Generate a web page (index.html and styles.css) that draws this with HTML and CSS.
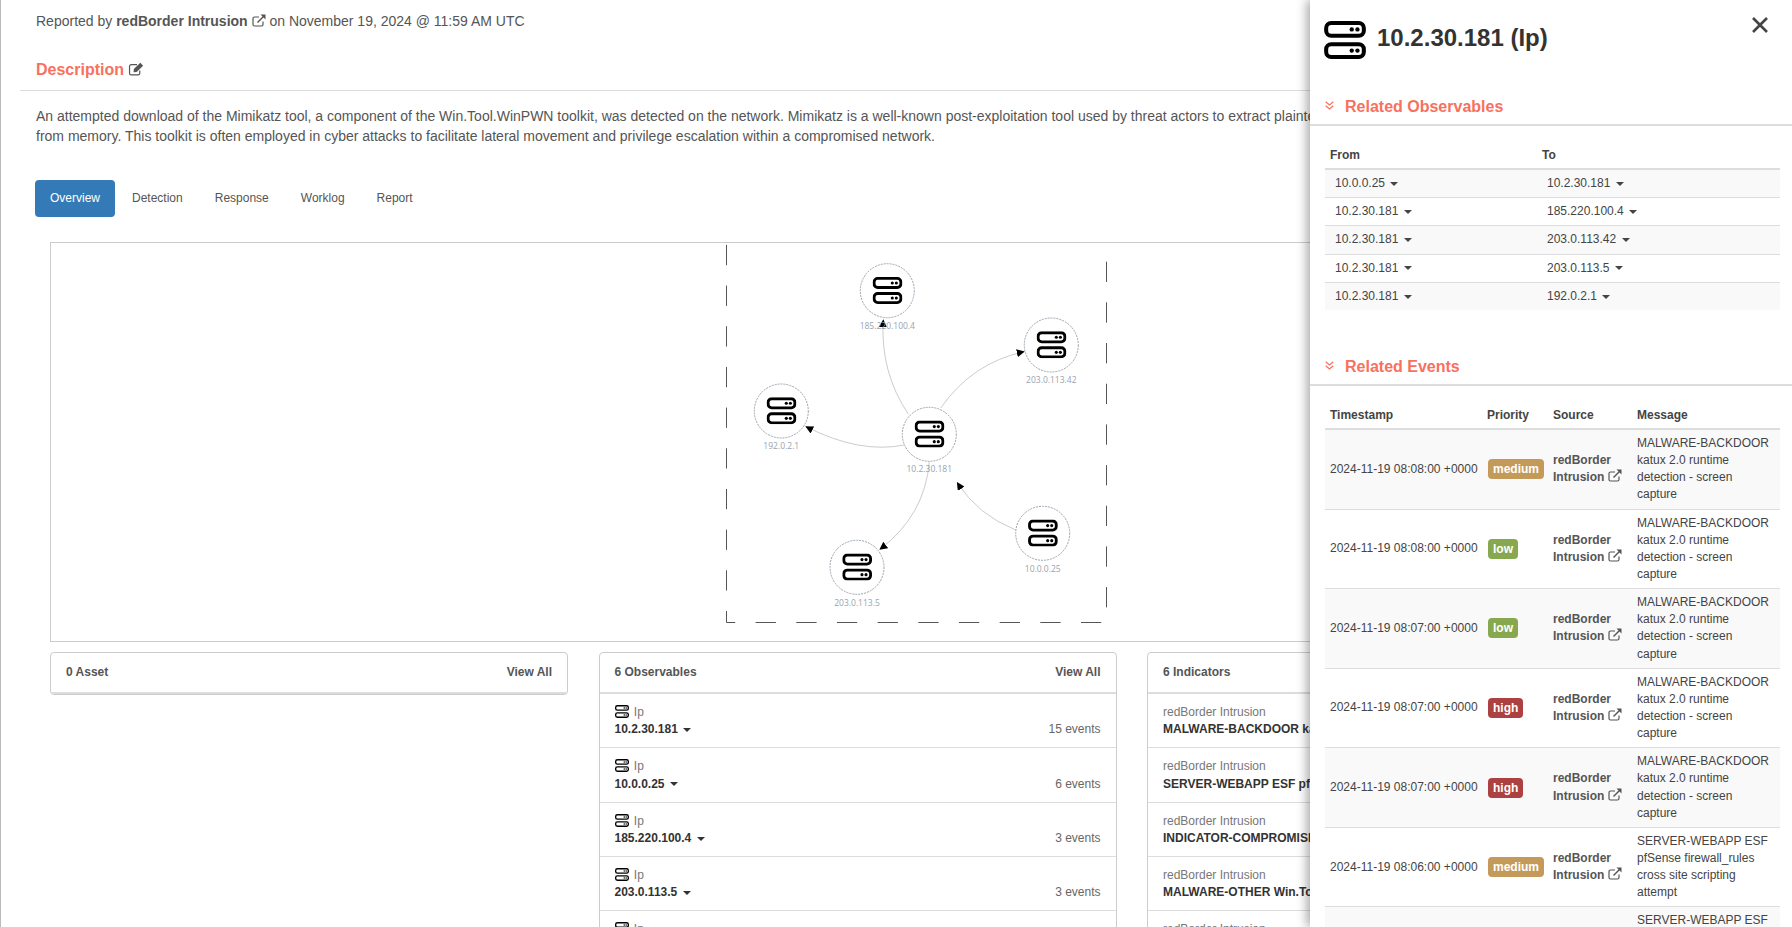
FILE: index.html
```html
<!DOCTYPE html>
<html lang="en">
<head>
    <meta charset="UTF-8">
    <title>Incident - redBorder Intrusion</title>
    <link rel="stylesheet" href="styles.css">
</head>
<body>
    <svg class="defs" width="0" height="0">
        <symbol id="server" viewBox="0 0 124 113">
            <rect x="6" y="6" width="112" height="38" rx="15" fill="#fff" stroke="#000" stroke-width="12"/>
            <rect x="6" y="69" width="112" height="38" rx="15" fill="#fff" stroke="#000" stroke-width="12"/>
            <circle cx="82" cy="25" r="6.500"/><circle cx="99" cy="25" r="6.500"/>
            <circle cx="82" cy="88" r="6.500"/><circle cx="99" cy="88" r="6.500"/>
        </symbol>
        <symbol id="ext" viewBox="0 0 14 13">
            <path d="M11 7.500v3a1.500 1.500 0 0 1-1.500 1.500h-7A1.500 1.500 0 0 1 1 10.500v-6A1.500 1.500 0 0 1 2.500 3H7" fill="none" stroke="currentColor" stroke-width="1.200"/>
            <path d="M5.500 8.500L12 2" fill="none" stroke="currentColor" stroke-width="1.400"/>
            <path d="M8.500 .5H13.500V5.500Z" fill="currentColor"/>
        </symbol>
        <symbol id="edit" viewBox="0 0 14 13">
            <path d="M10.500 8v2.500A1.500 1.500 0 0 1 9 12H2.500A1.500 1.500 0 0 1 1 10.500V4a1.500 1.500 0 0 1 1.500-1.500H8" fill="none" stroke="currentColor" stroke-width="1.100"/>
            <path d="M5 6.500L11 .8l2.600 2.600L7.600 9.300 4.800 9.600Z" fill="currentColor"/>
        </symbol>
        <symbol id="chevrons" viewBox="0 0 9 9">
            <path d="M.7 .8L4.500 4 8.300 .8M.7 4.800L4.500 8 8.300 4.800" fill="none" stroke="currentColor" stroke-width="1.200"/>
        </symbol>
    </svg>

    <div class="main">
        <p class="reported">Reported by <b>redBorder Intrusion</b> <svg class="ico-ext"><use href="#ext"/></svg> on November 19, 2024 @ 11:59 AM UTC</p>
        <h4 class="desc-title">Description <svg class="ico-edit"><use href="#edit"/></svg></h4>
        <p class="desc">An attempted download of the Mimikatz tool, a component of the Win.Tool.WinPWN toolkit, was detected on the network. Mimikatz is a well-known post-exploitation tool used by threat actors to extract plaintext credentials<br>from memory. This toolkit is often employed in cyber attacks to facilitate lateral movement and privilege escalation within a compromised network.</p>

        <ul class="tabs">
            <li class="tab active">Overview</li>
            <li class="tab">Detection</li>
            <li class="tab">Response</li>
            <li class="tab">Worklog</li>
            <li class="tab">Report</li>
        </ul>

        <div class="graph">
            <svg class="graph-svg" viewBox="51 243 1614 398">
                <defs>
                    <marker id="arrow" viewBox="0 0 10 10" refX="9" refY="5" markerUnits="userSpaceOnUse" markerWidth="8" markerHeight="8" orient="auto">
                        <path d="M0 0L10 5 0 10Z" fill="#000"/>
                    </marker>
                </defs>
                <path class="dash" d="M1106.500 261.700V622.500H726.500V243"/>
                <path class="edge" d="M908.300 414Q880 372 883.300 320"/>
                <path class="edge" d="M940.700 408Q972 363 1024 351.700"/>
                <path class="edge" d="M904 445Q860 454 806 426.700"/>
                <path class="edge" d="M929.300 461.700Q925 515 880 549.300"/>
                <path class="edge" d="M1015.700 530Q978 515 957.300 482.700"/>

                <circle class="node" cx="887.300" cy="290.700" r="27"/>
                <use href="#server" x="872.500" y="277" width="30" height="27"/>
                <text class="node-label" x="887.300" y="329">185.220.100.4</text>

                <circle class="node" cx="1051.300" cy="345" r="27"/>
                <use href="#server" x="1036.500" y="331.300" width="30" height="27"/>
                <text class="node-label" x="1051.300" y="383">203.0.113.42</text>

                <circle class="node" cx="781.300" cy="411" r="27"/>
                <use href="#server" x="766.500" y="397.300" width="30" height="27"/>
                <text class="node-label" x="781.300" y="449">192.0.2.1</text>

                <circle class="node" cx="929.300" cy="434.300" r="27"/>
                <use href="#server" x="914.500" y="420.600" width="30" height="27"/>
                <text class="node-label" x="929.300" y="472">10.2.30.181</text>

                <circle class="node" cx="1042.700" cy="533.300" r="27"/>
                <use href="#server" x="1027.900" y="519.600" width="30" height="27"/>
                <text class="node-label" x="1042.700" y="572">10.0.0.25</text>

                <circle class="node" cx="857" cy="567.300" r="27"/>
                <use href="#server" x="842.200" y="553.600" width="30" height="27"/>
                <text class="node-label" x="857" y="606">203.0.113.5</text>
            </svg>
        </div>

        <div class="cards">
            <div class="card">
                <div class="card-head"><b>0 Asset</b><span class="view-all">View All</span></div>
            </div>
            <div class="card">
                <div class="card-head"><b>6 Observables</b><span class="view-all">View All</span></div>
                <div class="card-row">
                    <div><div class="muted"><svg class="ico-server"><use href="#server"/></svg> Ip</div><b>10.2.30.181 <i class="caret"></i></b></div>
                    <span class="count">15 events</span>
                </div>
                <div class="card-row">
                    <div><div class="muted"><svg class="ico-server"><use href="#server"/></svg> Ip</div><b>10.0.0.25 <i class="caret"></i></b></div>
                    <span class="count">6 events</span>
                </div>
                <div class="card-row">
                    <div><div class="muted"><svg class="ico-server"><use href="#server"/></svg> Ip</div><b>185.220.100.4 <i class="caret"></i></b></div>
                    <span class="count">3 events</span>
                </div>
                <div class="card-row">
                    <div><div class="muted"><svg class="ico-server"><use href="#server"/></svg> Ip</div><b>203.0.113.5 <i class="caret"></i></b></div>
                    <span class="count">3 events</span>
                </div>
                <div class="card-row">
                    <div><div class="muted"><svg class="ico-server"><use href="#server"/></svg> Ip</div><b>203.0.113.42 <i class="caret"></i></b></div>
                    <span class="count">3 events</span>
                </div>
            </div>
            <div class="card">
                <div class="card-head"><b>6 Indicators</b><span class="view-all">View All</span></div>
                <div class="card-row"><div><div class="muted">redBorder Intrusion</div><b>MALWARE-BACKDOOR katux 2.0 runtime detection - screen capture</b></div></div>
                <div class="card-row"><div><div class="muted">redBorder Intrusion</div><b>SERVER-WEBAPP ESF pfSense firewall_rules cross site scripting attempt</b></div></div>
                <div class="card-row"><div><div class="muted">redBorder Intrusion</div><b>INDICATOR-COMPROMISE Mimikatz download attempt</b></div></div>
                <div class="card-row"><div><div class="muted">redBorder Intrusion</div><b>MALWARE-OTHER Win.Tool.WinPWN download attempt</b></div></div>
                <div class="card-row"><div><div class="muted">redBorder Intrusion</div><b>MALWARE-OTHER Win.Tool.Mimikatz download attempt</b></div></div>
            </div>
        </div>
    </div>

    <div class="panel">
        <div class="panel-head">
            <svg class="ico-title"><use href="#server"/></svg>
            <h3 class="panel-title">10.2.30.181 (Ip)</h3>
            <svg class="close" viewBox="0 0 16 16"><path d="M1 1L15 15M15 1L1 15"/></svg>
        </div>

        <h4 class="section"><svg class="ico-chevrons"><use href="#chevrons"/></svg>Related Observables</h4>
        <table class="tbl">
            <thead><tr><th class="c-from">From</th><th>To</th></tr></thead>
            <tbody>
                <tr><td><span class="ip">10.0.0.25 <i class="caret"></i></span></td><td><span class="ip">10.2.30.181 <i class="caret"></i></span></td></tr>
                <tr><td><span class="ip">10.2.30.181 <i class="caret"></i></span></td><td><span class="ip">185.220.100.4 <i class="caret"></i></span></td></tr>
                <tr><td><span class="ip">10.2.30.181 <i class="caret"></i></span></td><td><span class="ip">203.0.113.42 <i class="caret"></i></span></td></tr>
                <tr><td><span class="ip">10.2.30.181 <i class="caret"></i></span></td><td><span class="ip">203.0.113.5 <i class="caret"></i></span></td></tr>
                <tr><td><span class="ip">10.2.30.181 <i class="caret"></i></span></td><td><span class="ip">192.0.2.1 <i class="caret"></i></span></td></tr>
            </tbody>
        </table>

        <h4 class="section section-events"><svg class="ico-chevrons"><use href="#chevrons"/></svg>Related Events</h4>
        <table class="tbl">
            <thead><tr><th class="c-time">Timestamp</th><th class="c-prio">Priority</th><th class="c-src">Source</th><th>Message</th></tr></thead>
            <tbody>
                <tr><td class="stamp">2024-11-19 08:08:00 +0000</td><td><span class="badge medium">medium</span></td><td><b class="src">redBorder Intrusion <svg class="ico-ext"><use href="#ext"/></svg></b></td><td>MALWARE-BACKDOOR katux 2.0 runtime detection - screen capture</td></tr>
                <tr><td class="stamp">2024-11-19 08:08:00 +0000</td><td><span class="badge low">low</span></td><td><b class="src">redBorder Intrusion <svg class="ico-ext"><use href="#ext"/></svg></b></td><td>MALWARE-BACKDOOR katux 2.0 runtime detection - screen capture</td></tr>
                <tr><td class="stamp">2024-11-19 08:07:00 +0000</td><td><span class="badge low">low</span></td><td><b class="src">redBorder Intrusion <svg class="ico-ext"><use href="#ext"/></svg></b></td><td>MALWARE-BACKDOOR katux 2.0 runtime detection - screen capture</td></tr>
                <tr><td class="stamp">2024-11-19 08:07:00 +0000</td><td><span class="badge high">high</span></td><td><b class="src">redBorder Intrusion <svg class="ico-ext"><use href="#ext"/></svg></b></td><td>MALWARE-BACKDOOR katux 2.0 runtime detection - screen capture</td></tr>
                <tr><td class="stamp">2024-11-19 08:07:00 +0000</td><td><span class="badge high">high</span></td><td><b class="src">redBorder Intrusion <svg class="ico-ext"><use href="#ext"/></svg></b></td><td>MALWARE-BACKDOOR katux 2.0 runtime detection - screen capture</td></tr>
                <tr><td class="stamp">2024-11-19 08:06:00 +0000</td><td><span class="badge medium">medium</span></td><td><b class="src">redBorder Intrusion <svg class="ico-ext"><use href="#ext"/></svg></b></td><td>SERVER-WEBAPP ESF pfSense firewall_rules cross site scripting attempt</td></tr>
                <tr><td class="stamp">2024-11-19 08:06:00 +0000</td><td><span class="badge medium">medium</span></td><td><b class="src">redBorder Intrusion <svg class="ico-ext"><use href="#ext"/></svg></b></td><td>SERVER-WEBAPP ESF pfSense firewall_rules cross site scripting attempt</td></tr>
            </tbody>
        </table>
    </div>
</body>
</html>
```

FILE: styles.css
```css
* {
    box-sizing: border-box;
}
html, body {
    height: 100%;
}
body {
    margin: 0;
    overflow: hidden;
    position: relative;
    background: #fff;
    color: #555;
    font-family: "Liberation Sans", Arial, sans-serif;
    font-size: 12px;
    line-height: 1.42857;
}
.defs {
    position: absolute;
}
.main {
    width: 1700px;
    height: 100%;
    overflow: hidden;
    border-left: 1px solid #bbb;
    padding-top: 12px;
}
.reported {
    margin: 0 0 0 35px;
    font-size: 14px;
    height: 20px;
}
.ico-ext {
    width: 14px;
    height: 13px;
    vertical-align: -1px;
}
.desc-title {
    margin: 27px 0 0 19px;
    padding: 0 0 9px 16px;
    border-bottom: 1px solid #ddd;
    color: #f8705e;
    font-size: 16px;
    line-height: 22px;
    height: 32px;
}
.ico-edit {
    width: 16px;
    height: 14px;
    color: #555;
    vertical-align: -1px;
}
.desc {
    margin: 15px 0 0 35px;
    font-size: 14px;
    line-height: 20px;
    white-space: nowrap;
}
.tabs {
    display: flex;
    gap: 2px;
    list-style: none;
    margin: 34px 0 0 34px;
    padding: 0;
}
.tab {
    padding: 10px 15px;
    border-radius: 4px;
    color: #555;
}
.tab.active {
    background: #337ab7;
    color: #fff;
}
.graph {
    margin: 25px 0 0 49px;
    width: 1616px;
    height: 400px;
    border: 1px solid #ccc;
}
.graph-svg {
    display: block;
    width: 1614px;
    height: 398px;
}
.dash {
    fill: none;
    stroke: #555;
    stroke-width: 1;
    stroke-dasharray: 20.3 20.37;
}
.edge {
    fill: none;
    stroke: #ccc;
    stroke-width: 1;
    marker-end: url(#arrow);
}
.node {
    fill: #fff;
    stroke: #9aa3ad;
    stroke-width: 1;
    stroke-dasharray: 2 1;
}
.node-label {
    fill: #9aa3ad;
    font-family: "Open Sans", sans-serif;
    font-size: 8.5px;
    text-anchor: middle;
}
.cards {
    display: grid;
    grid-template-columns: repeat(3, 518px);
    column-gap: 30.5px;
    align-items: start;
    margin: 10px 0 0 49px;
}
.card {
    border: 1px solid #ccc;
    border-radius: 4px;
    overflow: hidden;
}
.card-head {
    display: flex;
    justify-content: space-between;
    height: 41px;
    padding: 11px 15px 0;
    border-bottom: 2px solid #ddd;
}
.view-all {
    font-weight: bold;
}
.card-row {
    display: flex;
    justify-content: space-between;
    align-items: flex-end;
    padding: 10px 15px 9px;
    border-bottom: 1px solid #ddd;
    white-space: nowrap;
    color: #333;
}
.muted {
    color: #777;
}
.ico-server {
    width: 14px;
    height: 13px;
    margin-right: 2px;
    vertical-align: -2px;
}
.count {
    color: #666;
}
.caret {
    display: inline-block;
    width: 0;
    height: 0;
    margin-left: 2px;
    vertical-align: middle;
    border-top: 4px solid;
    border-right: 4px solid transparent;
    border-left: 4px solid transparent;
}
.panel {
    position: absolute;
    top: 0;
    right: 0;
    bottom: 0;
    width: 482px;
    overflow: hidden;
    background: #fff;
    color: #444;
    box-shadow: -3px 0 10px rgba(0, 0, 0, 0.35);
}
.panel-head {
    position: relative;
    display: flex;
    align-items: center;
    gap: 11px;
    height: 92px;
    padding: 21px 0 34px 14px;
}
.ico-title {
    width: 42px;
    height: 38px;
}
.panel-title {
    margin: 0 0 4px;
    color: #333;
    font-size: 24px;
    line-height: 34px;
}
.close {
    position: absolute;
    top: 17px;
    right: 24px;
    width: 16px;
    height: 16px;
    fill: none;
    stroke: #444;
    stroke-width: 2.6;
}
.section {
    margin: 0;
    height: 34px;
    padding: 4px 0 0 15px;
    border-bottom: 2px solid #ddd;
    color: #f8705e;
    font-size: 16px;
    line-height: 22.86px;
}
.section-events {
    margin-top: 42px;
}
.ico-chevrons {
    width: 9px;
    height: 9px;
    margin-right: 11px;
    vertical-align: 2px;
}
.tbl {
    width: 455px;
    margin: 15px 0 0 15px;
    table-layout: fixed;
    border-collapse: collapse;
}
.tbl th {
    padding: 6px 5px 4px;
    text-align: left;
    border-bottom: 2px solid #ddd;
    color: #444;
}
.tbl td {
    padding: 5px;
    vertical-align: middle;
    border-top: 1px solid #ddd;
}
.tbl thead + tbody tr:first-child td {
    border-top: 0;
}
.tbl tbody tr:nth-child(odd) {
    background: #f9f9f9;
}
.c-from {
    width: 212px;
}
.c-time {
    width: 157px;
}
.c-prio {
    width: 66px;
}
.c-src {
    width: 84px;
}
.stamp {
    white-space: nowrap;
}
.ip {
    padding-left: 5px;
}
.src {
    color: #555;
}
.badge {
    display: inline-block;
    padding: 0 5px;
    margin-left: 1px;
    height: 20px;
    line-height: 20px;
    border-radius: 4px;
    color: #fff;
    font-weight: bold;
}
.badge.medium {
    background: #c49a5a;
}
.badge.low {
    background: #87a84f;
}
.badge.high {
    background: #ad4040;
}
```
